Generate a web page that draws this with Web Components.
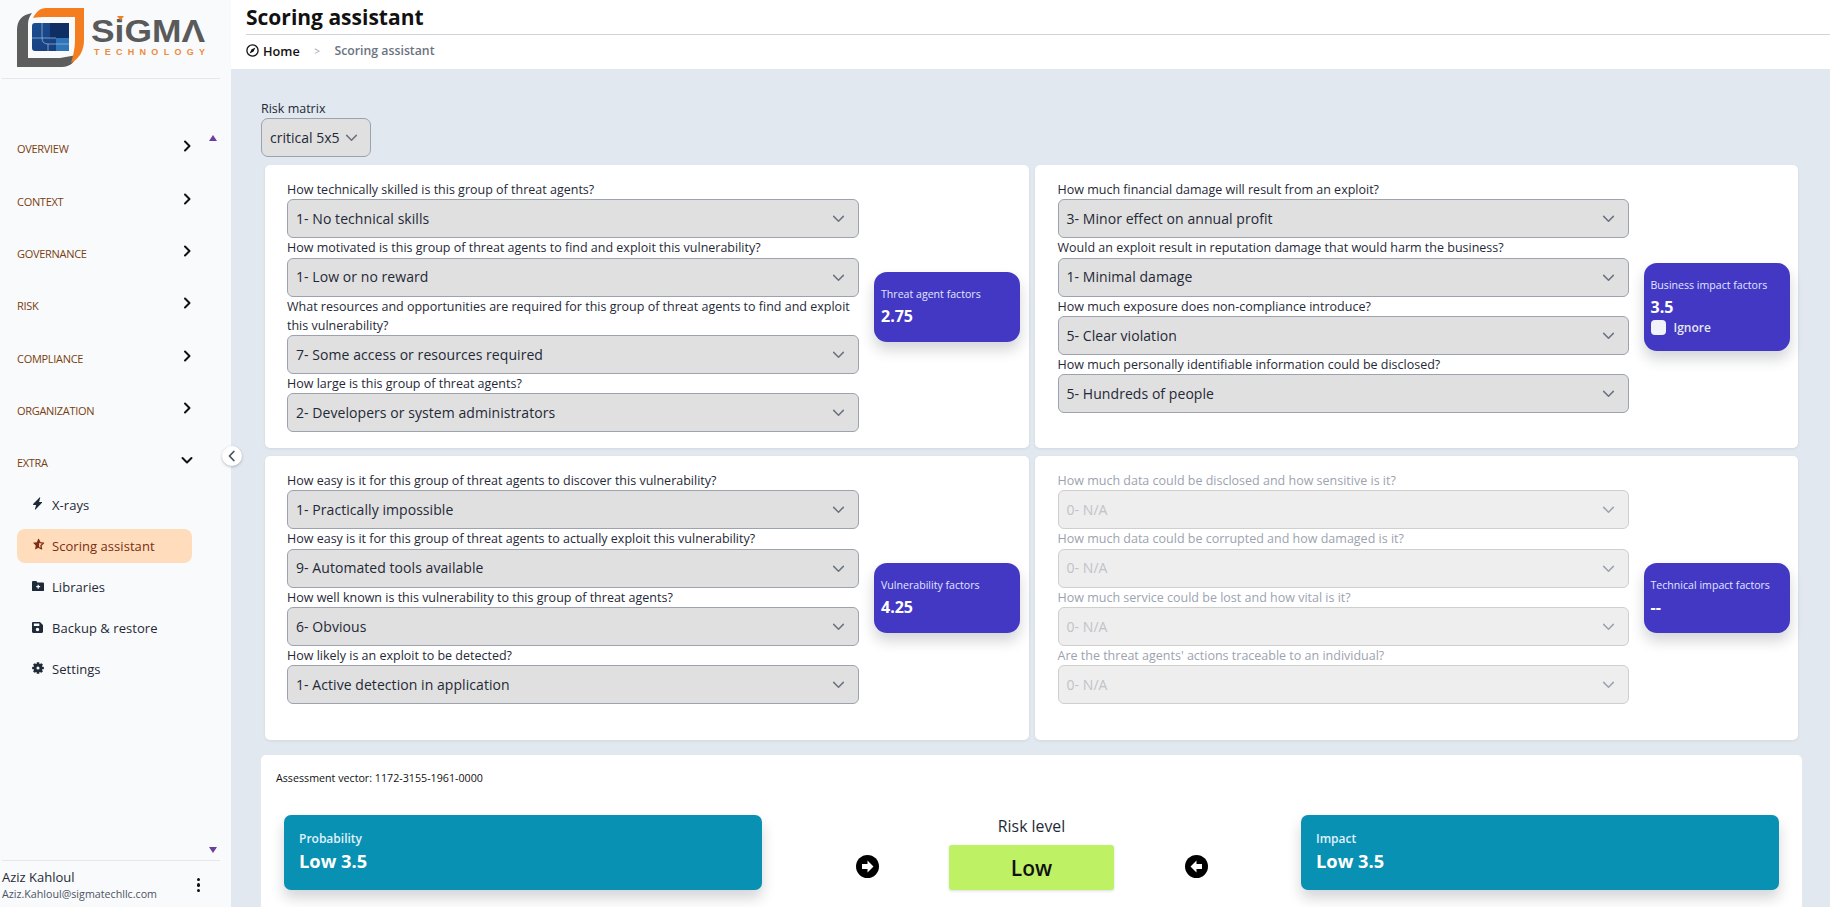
<!DOCTYPE html>
<html lang="en"><head><meta charset="utf-8"><title>Scoring assistant</title>
<style>
html,body{margin:0;height:907px;overflow:hidden;background:#e2e8f0}
body{font-family:"Open Sans","Noto Sans",sans-serif;color:#111827}
app-shell{height:907px}
</style></head><body>

<app-shell>
  <side-bar slot="side">
    <nav-group label="OVERVIEW"></nav-group>
    <nav-group label="CONTEXT"></nav-group>
    <nav-group label="GOVERNANCE"></nav-group>
    <nav-group label="RISK"></nav-group>
    <nav-group label="COMPLIANCE"></nav-group>
    <nav-group label="ORGANIZATION"></nav-group>
    <nav-group label="EXTRA" open></nav-group>
    <nav-item icon="bolt">X-rays</nav-item>
    <nav-item icon="star" active>Scoring assistant</nav-item>
    <nav-item icon="folder">Libraries</nav-item>
    <nav-item icon="save">Backup &amp; restore</nav-item>
    <nav-item icon="gear">Settings</nav-item>
  </side-bar>
  <page-header slot="head"></page-header>
  <risk-matrix-select slot="main"></risk-matrix-select>
  <card-grid slot="main">
    <factor-card title-text="Threat agent factors" value="2.75">
      <score-select label="How technically skilled is this group of threat agents?" value="1- No technical skills"></score-select>
      <score-select label="How motivated is this group of threat agents to find and exploit this vulnerability?" value="1- Low or no reward"></score-select>
      <score-select label="What resources and opportunities are required for this group of threat agents to find and exploit this vulnerability?" value="7- Some access or resources required"></score-select>
      <score-select label="How large is this group of threat agents?" value="2- Developers or system administrators"></score-select>
    </factor-card>
    <factor-card title-text="Business impact factors" value="3.5" ignore>
      <score-select label="How much financial damage will result from an exploit?" value="3- Minor effect on annual profit"></score-select>
      <score-select label="Would an exploit result in reputation damage that would harm the business?" value="1- Minimal damage"></score-select>
      <score-select label="How much exposure does non-compliance introduce?" value="5- Clear violation"></score-select>
      <score-select label="How much personally identifiable information could be disclosed?" value="5- Hundreds of people"></score-select>
    </factor-card>
    <factor-card title-text="Vulnerability factors" value="4.25">
      <score-select label="How easy is it for this group of threat agents to discover this vulnerability?" value="1- Practically impossible"></score-select>
      <score-select label="How easy is it for this group of threat agents to actually exploit this vulnerability?" value="9- Automated tools available"></score-select>
      <score-select label="How well known is this vulnerability to this group of threat agents?" value="6- Obvious"></score-select>
      <score-select label="How likely is an exploit to be detected?" value="1- Active detection in application"></score-select>
    </factor-card>
    <factor-card title-text="Technical impact factors" value="--">
      <score-select disabled label="How much data could be disclosed and how sensitive is it?" value="0- N/A"></score-select>
      <score-select disabled label="How much data could be corrupted and how damaged is it?" value="0- N/A"></score-select>
      <score-select disabled label="How much service could be lost and how vital is it?" value="0- N/A"></score-select>
      <score-select disabled label="Are the threat agents' actions traceable to an individual?" value="0- N/A"></score-select>
    </factor-card>
  </card-grid>
  <assessment-panel slot="main"></assessment-panel>
</app-shell>

<script>
const CHEV=(w=14,sw=1.6)=>`<svg width="${w}" height="${w}" viewBox="0 0 14 14" fill="none" stroke="currentColor" stroke-width="${sw}" stroke-linecap="round" stroke-linejoin="round"><polyline points="2.5,5 7,9.5 11.5,5"/></svg>`;
const RIGHT=(w=14,sw=2)=>`<svg width="${w}" height="${w}" viewBox="0 0 14 14" fill="none" stroke="currentColor" stroke-width="${sw}" stroke-linecap="round" stroke-linejoin="round"><polyline points="5,2.5 9.5,7 5,11.5"/></svg>`;
const ICONS={
 bolt:`<svg viewBox="0 0 12 14" width="11" height="13"><path fill="currentColor" d="M8.2 0.4 1.2 7.6c-.3.4 0 .9.4.9h2.9L3.2 13.2c-.1.5.4.7.7.4l7-7.4c.3-.3.1-.8-.4-.8H7.7l1.3-4.6c.1-.5-.5-.7-.8-.4z"/></svg>`,
 star:`<svg viewBox="0 0 14 14" width="13" height="13"><path d="M7 1.6 8.6 5l3.8.5-2.8 2.6.7 3.7L7 10z" fill="none" stroke="currentColor" stroke-width="1.4" stroke-linejoin="round"/><path d="M7 .8 5.2 4.6 1 5.2l3 3-.7 4.2L7 10.4z" fill="currentColor"/></svg>`,
 folder:`<svg viewBox="0 0 14 12" width="12" height="10.5"><path fill="currentColor" fill-rule="evenodd" d="M1.4 0H5l1.4 1.5h6.2c.8 0 1.4.6 1.4 1.4v7.7c0 .8-.6 1.4-1.4 1.4H1.4C.6 12 0 11.4 0 10.6V1.4C0 .6.6 0 1.4 0zM6.5 4.2v1.6H4.9v1.4h1.6v1.6h1.4V7.2h1.6V5.800H7.9V4.2z"/></svg>`,
 save:`<svg viewBox="0 0 12 12" width="11" height="11"><path fill="currentColor" fill-rule="evenodd" d="M1.3 0h7.4L12 3.3v7.4c0 .7-.6 1.3-1.3 1.3H1.3C.6 12 0 11.4 0 10.7V1.3C0 .6.6 0 1.3 0zM2 1.7v2.6h6V1.7zM6 6.4a1.9 1.9 0 1 0 0 3.8 1.9 1.9 0 0 0 0-3.8z"/></svg>`,
 gear:`<svg viewBox="0 0 14 14" width="12" height="12"><g fill="currentColor">${[0,45,90,135].map(a=>`<rect x="5.4" y="0.2" width="3.2" height="13.6" rx=".8" transform="rotate(${a} 7 7)"/>`).join('')}</g><circle cx="7" cy="7" r="3.6" fill="none" stroke="currentColor" stroke-width="3"/><circle cx="7" cy="7" r="1.8" fill="#f9fafb"/></svg>`
};

function define(name,css,render){
  customElements.define(name,class extends HTMLElement{
    connectedCallback(){
      if(this.shadowRoot)return;
      const r=this.attachShadow({mode:'open'});
      r.innerHTML=`<style>${css}</style>`+render(this);
    }
  });
}

define('app-shell',`
 :host{display:grid;grid-template-columns:231px 1fr;grid-template-rows:69px 1fr;position:relative;overflow:hidden}
 .s{grid-row:1/3;display:flex;min-height:0}
 .h{display:block}
 main{padding:31px 28px 0 30px;display:flex;flex-direction:column;min-width:0}
 .collapse{position:absolute;left:222px;top:446px;width:20px;height:20px;border-radius:50%;background:#fff;box-shadow:0 1px 3px rgba(0,0,0,.25);display:flex;align-items:center;justify-content:center;color:#4b5563}
`,()=>`<div class="s"><slot name="side"></slot></div><div class="h"><slot name="head"></slot></div><main><slot name="main"></slot></main>
<div class="collapse"><svg width="12" height="12" viewBox="0 0 12 12" fill="none" stroke="currentColor" stroke-width="1.8" stroke-linecap="round" stroke-linejoin="round"><polyline points="7.8,1.5 3.5,6 7.8,10.5"/></svg></div>`);

define('side-bar',`
 :host{display:flex;flex-direction:column;width:231px;height:907px;background:#f9fafb;position:relative;box-sizing:border-box}
 .logo{height:78px;margin:0 11px 0 2px;border-bottom:1px solid #e5e7eb;flex:none}
 .logo svg{display:block;margin-left:-2px}
 nav{flex:1;padding-top:43.5px;display:flex;flex-direction:column}
 .tri{position:absolute;left:209px;width:0;height:0;border-left:4.5px solid transparent;border-right:4.5px solid transparent}
 .up{top:135px;border-bottom:6px solid #6b3fa0}
 .down{top:847px;border-top:6px solid #6b3fa0}
 .user{height:47px;margin:0 11px 0 2px;border-top:1px solid #e5e7eb;display:flex;align-items:center;justify-content:space-between;flex:none;box-sizing:border-box;padding-top:2px}
 .n{font-size:13px;line-height:18px;color:#1f2937}
 .e{font-size:10.7px;line-height:16px;color:#4b5563}
 .dots{margin-right:20px;display:flex;flex-direction:column;gap:2px}
 .dots i{display:block;width:3.4px;height:3.4px;border-radius:50%;background:#111}
`,()=>`<div class="logo"><svg width="231" height="78" viewBox="0 0 231 78">
  <defs><linearGradient id="b" x1="0" y1="0" x2="1" y2="1"><stop offset="0" stop-color="#1c4e92"/><stop offset="1" stop-color="#163a78"/></linearGradient></defs>
  <path d="M32 13C22 15 17 20 17 30V67H62C70 67 75 62 77 55L60 58H28V24C28 19 30 16 32 13Z" fill="#5d5d5d"/>
  <path d="M46 8H84V40C84 50 80 58 71 63 75 50 75 44 75 36V17H45C38 17 33 18 33 18 36 12 40 8 46 8Z" fill="#f47d20"/>
  <rect x="32" y="23" width="37" height="28" rx="3" fill="url(#b)"/>
  <rect x="50" y="23" width="19" height="15" fill="#0f2e63"/><rect x="56" y="38" width="13" height="13" fill="#2f76b8"/>
  <path d="M42 23V38Q42 44 48 44V51M32 38H56M48 44H69" fill="none" stroke="#9fc1e4" stroke-width=".7"/>
  <text x="91" y="42" font-family="Liberation Sans" font-weight="700" font-size="32" fill="#5a5a5a" textLength="114" lengthAdjust="spacingAndGlyphs">SiGMΛ</text>
  <path d="M117 16h7l-3.5 4.5z" fill="#f47d20"/>
  <text x="94" y="54.500" font-family="Liberation Sans" font-weight="700" font-size="9" fill="#f08a3c" textLength="111">TECHNOLOGY</text>
 </svg></div>
 <nav><slot></slot></nav>
 <div class="tri up"></div><div class="tri down"></div>
 <div class="user"><div><div class="n">Aziz Kahloul</div><div class="e">Aziz.Kahloul@sigmatechllc.com</div></div><div class="dots"><i></i><i></i><i></i></div></div>`);

define('nav-group',`
 :host{display:flex;align-items:center;justify-content:space-between;height:52.4px;padding:0 37px 0 17px;flex:none;font-size:11px;font-weight:500;letter-spacing:-.3px;color:#7a3e10}
 :host([open]){height:51px}
 svg{display:block;color:#111;margin-bottom:5px}
`,h=>`<span>${h.getAttribute('label')}</span>${h.hasAttribute('open')?CHEV(14,2):RIGHT(14,2)}`);

define('nav-item',`
 :host{display:flex;align-items:center;height:34px;margin:0 39px 7.1px 17px;padding-left:15px;border-radius:8px;font-size:13px;letter-spacing:.05px;color:#1f2937;flex:none}
 :host([active]){background:#fedcbc;color:#7c2d12}
 .i{width:20px;display:flex;align-items:center;color:#1f2937}
 :host([active]) .i{color:#7c2d12}
 svg{display:block;margin-bottom:2px}
`,h=>`<span class="i">${ICONS[h.getAttribute('icon')]}</span><span><slot></slot></span>`);

define('page-header',`
 :host{display:block;height:69px;background:#fff;padding-left:15px;box-sizing:border-box}
 h1{margin:0;height:35px;box-sizing:border-box;border-bottom:1px solid #d1d5db;font-size:21px;line-height:34px;font-weight:700;color:#111}
 .b{display:flex;align-items:center;height:31px;font-size:12.7px}
 .home{display:flex;align-items:center;gap:4px;font-weight:600;color:#111}
 .sep{margin:0 14.5px;font-size:10px;color:#9ca3af}
 .cur{color:#6b7280;font-weight:600;font-size:12.3px}
`,()=>`<h1>Scoring assistant</h1><div class="b"><span class="home"><svg width="13" height="13" viewBox="0 0 13 13"><circle cx="6.5" cy="6.500" r="5.6" fill="none" stroke="#111" stroke-width="1.300"/><path d="M9.400 3.600 7.600 7.600 3.600 9.400 5.400 5.400z" fill="#111"/></svg>Home</span><span class="sep">&gt;</span><span class="cur">Scoring assistant</span></div>`);

define('risk-matrix-select',`
 :host{display:block;height:65px;font-size:12.5px;line-height:18px}
 .s{width:110px;height:39px;box-sizing:border-box;border:1px solid #9ca3af;border-radius:7px;background:#e0e0e0;display:flex;align-items:center;justify-content:space-between;padding:0 11px 0 8px;font-size:14px;color:#1f2937}
 svg{color:#6b7280}
`,()=>`<div style="color:#1f2937">Risk matrix</div><div class="s"><span>critical 5x5</span>${CHEV(15,1.4)}</div>`);

define('card-grid',`
 :host{display:grid;grid-template-columns:1fr 1fr;grid-template-rows:283px 284px;gap:8px 6px;margin:0 4px 15px}
`,()=>`<slot></slot>`);

define('factor-card',`
 :host{display:flex;background:#fff;border-radius:5px;box-shadow:0 1px 3px rgba(0,0,0,.08);padding:15px 7px 0 22px;box-sizing:border-box;gap:15px;min-width:0}
 :host(:nth-child(even)){padding-left:23px}
 .q{width:572px;flex:none}
 :host(:nth-child(even)) .q{width:571px}
 .c{flex:1;display:flex;align-items:center;margin-top:-15px}
 .box{width:146px;box-sizing:border-box;background:#4338c4;border-radius:13px;color:#fff;padding:14px 7px 14px 7px;box-shadow:0 8px 14px rgba(17,24,39,.18)}
 .t{font-size:10.6px;line-height:17px;color:#e0e7ff;white-space:nowrap}
 .v{font-size:16px;line-height:23px;font-weight:700;margin-top:2px;white-space:nowrap}
 .ig{display:flex;align-items:center;gap:8px;font-size:12px;font-weight:600;color:#e5e7eb;line-height:18px;margin:0}
 .ig i{display:block;width:15px;height:15px;background:#f1f3f9;border-radius:4px}
`,h=>`<div class="q"><slot></slot></div><div class="c"><div class="box"><div class="t">${h.getAttribute('title-text')}</div><div class="v">${h.getAttribute('value')}</div>${h.hasAttribute('ignore')?'<div class="ig"><i></i>Ignore</div>':''}</div></div>`);

define('score-select',`
 :host{display:block;font-size:12.5px;line-height:19.3px;color:#1f2937}
 :host([disabled]){color:#9ca3af}
 .s{height:39px;box-sizing:border-box;border:1px solid #9ca3af;border-radius:6px;background:#e0e0e0;display:flex;align-items:center;justify-content:space-between;padding:0 12px 0 8px;font-size:14px;letter-spacing:.06px;color:#1f2937}
 :host([disabled]) .s{background:#eee;border-color:#cfcfcf;color:#c0c3c8}
 svg{color:#6b7280}
 :host([disabled]) svg{color:#9ca3af}
`,h=>`<div>${h.getAttribute('label')}</div><div class="s"><span>${h.getAttribute('value')}</span>${CHEV(15,1.4)}</div>`);

const ARROW=d=>`<svg width="23" height="23" viewBox="0 0 23 23"><circle cx="11.500" cy="11.500" r="11.500" fill="#000"/><path fill="#fff" transform="${d?'':'rotate(180 11.500 11.500)'}" d="M11.500 5.500 17.500 11.500 11.500 17.500V14H6V9H11.500z"/></svg>`;
define('assessment-panel',`
 :host{display:block;height:160px;background:#fff;border-radius:5px;padding:15px 23px 0;box-sizing:border-box;position:relative}
 .vec{font-size:10.7px;line-height:16px;color:#111;margin-left:-8px}
 .row{display:grid;grid-template-columns:478px 1fr 165px 1fr 478px;margin-top:29px;align-items:end}
 .c{background:#0891b2;border-radius:7px;color:#fff;height:75px;box-sizing:border-box;padding:15px 15px;box-shadow:0 8px 14px rgba(17,24,39,.18)}
 .a{font-size:12px;line-height:18px;font-weight:600;color:#e0f2fe}
 .b{font-size:18.3px;line-height:25px;font-weight:700}
 .ar{display:flex;justify-content:center;padding-bottom:12px}
 .ar.l1{padding-left:24px}.ar.r1{padding-right:22px}
 .m{display:flex;flex-direction:column;align-items:center}
 .l{font-size:15.8px;line-height:22px;color:#1f2937;margin-bottom:8px}
 .low{width:165px;height:45px;background:#bef264;border-radius:3px;display:flex;align-items:center;justify-content:center;font-size:21px;font-weight:600;color:#111;box-shadow:0 1px 3px rgba(0,0,0,.15)}
`,()=>`<div class="vec">Assessment vector: 1172-3155-1961-0000</div><div class="row">
 <div class="c"><div class="a">Probability</div><div class="b">Low 3.5</div></div>
 <div class="ar l1">${ARROW(1)}</div>
 <div class="m"><div class="l">Risk level</div><div class="low">Low</div></div>
 <div class="ar r1">${ARROW(0)}</div>
 <div class="c"><div class="a">Impact</div><div class="b">Low 3.5</div></div></div>`);
</script>
</body></html>
